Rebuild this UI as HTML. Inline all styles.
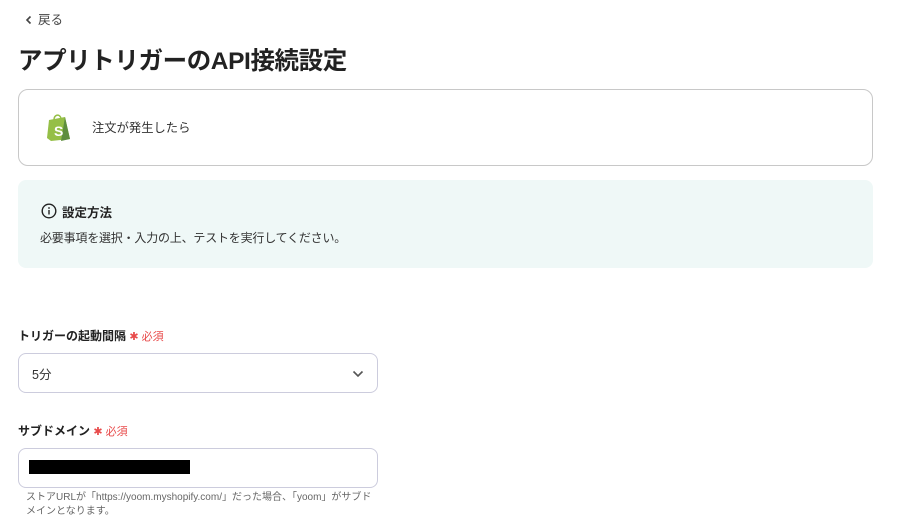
<!DOCTYPE html>
<html><head><meta charset="utf-8"><style>
body{margin:0;width:905px;height:531px;background:#fff;font-family:"Liberation Sans","Noto Sans CJK JP",sans-serif;color:#333;position:relative;overflow:hidden}
.a{position:absolute}
</style></head><body>
<div class="a" style="left:24px;top:9px;font-size:12.5px;color:#444">
<svg width="10" height="10" viewBox="0 0 10 10" style="vertical-align:-1px;margin-right:4px"><path d="M6.5 1.5L3 5l3.5 3.5" stroke="#444" stroke-width="1.6" fill="none"/></svg>戻る</div>
<div class="a" style="left:18px;top:42px;font-size:24.5px;font-weight:bold;color:#222;letter-spacing:-0.4px">アプリトリガーのAPI接続設定</div>
<div class="a" style="left:18px;top:89px;width:853px;height:75px;border:1px solid #c8c8c8;border-radius:10px"></div>
<svg class="a" style="left:45px;top:112px" width="28" height="30" viewBox="0 0 28 30"><path d="M4 8L20 5L25 27L6 29L2 26Z" fill="#95bf47"/><path d="M20 5L25 27L16 29Z" fill="#5e8e3e"/><path d="M9 8C9 3 14 1 16 6" stroke="#95bf47" stroke-width="1.5" fill="none"/><text x="9" y="24" font-size="14" font-weight="bold" fill="#fff" font-family="Liberation Sans">S</text></svg>
<div class="a" style="left:92px;top:118px;font-size:12.3px;color:#333">注文が発生したら</div>
<div class="a" style="left:18px;top:180px;width:855px;height:88px;background:#eff8f7;border-radius:8px"></div>
<svg class="a" style="left:41px;top:203px" width="16" height="16" viewBox="0 0 16 16"><circle cx="8" cy="8" r="6.8" stroke="#222" stroke-width="1.4" fill="none"/><rect x="7.3" y="7" width="1.4" height="4.5" fill="#222"/><circle cx="8" cy="5" r="0.9" fill="#222"/></svg>
<div class="a" style="left:62px;top:202px;font-size:12.5px;font-weight:bold;color:#222">設定方法</div>
<div class="a" style="left:40px;top:229px;font-size:12px;color:#333;letter-spacing:-0.2px">必要事項を選択・入力の上、テストを実行してください。</div>
<div class="a" style="left:18px;top:327px;font-size:12px;font-weight:bold;color:#222">トリガーの起動間隔 <span style="color:#e84a4a;font-weight:normal;font-size:11px">✱ 必須</span></div>
<div class="a" style="left:18px;top:353px;width:358px;height:38px;border:1px solid #ccd;border-radius:8px"></div>
<div class="a" style="left:32px;top:364px;font-size:12.5px;color:#333">5分</div>
<svg class="a" style="left:352px;top:370px" width="12" height="8" viewBox="0 0 12 8"><path d="M1.5 1.5L6 6l4.5-4.5" stroke="#555" stroke-width="1.6" fill="none"/></svg>
<div class="a" style="left:18px;top:422px;font-size:12px;font-weight:bold;color:#222">サブドメイン <span style="color:#e84a4a;font-weight:normal;font-size:11px">✱ 必須</span></div>
<div class="a" style="left:18px;top:448px;width:358px;height:38px;border:1px solid #ccd;border-radius:8px"></div>
<div class="a" style="left:29px;top:460px;width:161px;height:14px;background:#000"></div>
<div class="a" style="left:26px;top:491px;font-size:10px;color:#666;line-height:14px;width:352px">ストアURLが「https://yoom.myshopify.com/」だった場合、「yoom」がサブドメインとなります。</div>
</body></html>
